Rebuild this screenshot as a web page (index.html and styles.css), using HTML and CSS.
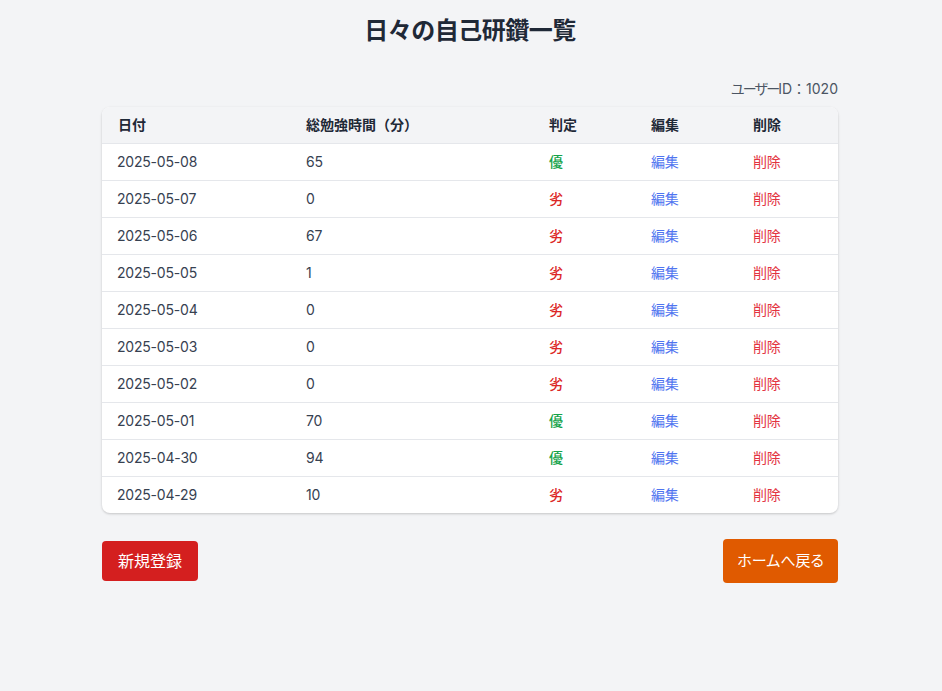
FILE: index.html
```html
<!DOCTYPE html>
<html lang="ja">
<head>
<meta charset="utf-8">
<title>日々の自己研鑽一覧</title>
<link rel="stylesheet" href="styles.css">
</head>
<body>
<main class="container">
  <h1 class="title">日々の自己研鑽一覧</h1>
  <div class="user-id"><span class="kana">ユーザー</span>ID：1020</div>
  <div class="card">
    <table class="records">
      <colgroup>
        <col class="c-date"><col class="c-min"><col class="c-judge"><col class="c-edit"><col class="c-del">
      </colgroup>
      <thead>
        <tr><th>日付</th><th>総勉強時間（分）</th><th>判定</th><th>編集</th><th>削除</th></tr>
      </thead>
      <tbody>
        <tr><td>2025-05-08</td><td>65</td><td class="good">優</td><td><a class="edit" href="#">編集</a></td><td><a class="del" href="#">削除</a></td></tr>
        <tr><td>2025-05-07</td><td>0</td><td class="bad">劣</td><td><a class="edit" href="#">編集</a></td><td><a class="del" href="#">削除</a></td></tr>
        <tr><td>2025-05-06</td><td>67</td><td class="bad">劣</td><td><a class="edit" href="#">編集</a></td><td><a class="del" href="#">削除</a></td></tr>
        <tr><td>2025-05-05</td><td>1</td><td class="bad">劣</td><td><a class="edit" href="#">編集</a></td><td><a class="del" href="#">削除</a></td></tr>
        <tr><td>2025-05-04</td><td>0</td><td class="bad">劣</td><td><a class="edit" href="#">編集</a></td><td><a class="del" href="#">削除</a></td></tr>
        <tr><td>2025-05-03</td><td>0</td><td class="bad">劣</td><td><a class="edit" href="#">編集</a></td><td><a class="del" href="#">削除</a></td></tr>
        <tr><td>2025-05-02</td><td>0</td><td class="bad">劣</td><td><a class="edit" href="#">編集</a></td><td><a class="del" href="#">削除</a></td></tr>
        <tr><td>2025-05-01</td><td>70</td><td class="good">優</td><td><a class="edit" href="#">編集</a></td><td><a class="del" href="#">削除</a></td></tr>
        <tr><td>2025-04-30</td><td>94</td><td class="good">優</td><td><a class="edit" href="#">編集</a></td><td><a class="del" href="#">削除</a></td></tr>
        <tr><td>2025-04-29</td><td>10</td><td class="bad">劣</td><td><a class="edit" href="#">編集</a></td><td><a class="del" href="#">削除</a></td></tr>
      </tbody>
    </table>
  </div>
  <div class="actions">
    <a class="btn btn-new" href="#">新規登録</a>
    <a class="btn btn-home" href="#">ホームへ戻る</a>
  </div>
</main>
</body>
</html>
```
FILE: styles.css
```css
* { box-sizing: border-box; }
html, body { margin: 0; padding: 0; }
body {
  background: #f3f4f6;
  font-family: Inter, "Noto Sans CJK JP", sans-serif;
  color: #1f2937;
  min-height: 691px;
}
.container {
  max-width: 768px;
  margin: 0 auto;
  padding: 15px 17px 0 15px;
}
.title {
  margin: 0 0 32px;
  font-size: 24px;
  line-height: 32px;
  font-weight: 700;
  text-align: center;
  letter-spacing: -0.5px;
  color: #1f2937;
}
.user-id {
  text-align: right;
  font-size: 14px;
  line-height: 20px;
  color: #4b5563;
  margin-bottom: 8px;
}
.kana { font-feature-settings: "palt"; letter-spacing: -1.8px; }
.card {
  background: #fff;
  border-radius: 8px;
  overflow: hidden;
  box-shadow: 0 1px 3px rgba(0,0,0,0.12), 0 1px 2px rgba(0,0,0,0.08);
}
.records {
  width: 100%;
  border-collapse: collapse;
  table-layout: fixed;
  font-size: 14px;
  line-height: 20px;
}
.c-date { width: 188px; }
.c-min { width: 243px; }
.c-judge { width: 102px; }
.c-edit { width: 102px; }
.c-del { width: auto; }
.records th {
  background: #f3f4f6;
  text-align: left;
  font-weight: 600;
  color: #1f2937;
  padding: 8px 16px 8px 16px;
  border-bottom: 1px solid #e5e7eb;
}
.records td {
  padding: 8px 16px;
  color: #374151;
  border-bottom: 1px solid #e5e7eb;
  letter-spacing: -0.2px;
}
.records td:first-child { padding-left: 15px; }
.records tbody tr:last-child td { border-bottom: none; }
.records td.good { color: #16a34a; font-weight: 500; }
.records td.bad { color: #dc2626; font-weight: 500; }
.edit { color: #4f74f0; text-decoration: none; }
.del { color: #e3343f; text-decoration: none; }
.actions {
  margin-top: 26px;
  display: flex;
  justify-content: space-between;
  align-items: center;
}
.btn {
  display: inline-block;
  color: #fff;
  text-decoration: none;
  border-radius: 4px;
}
.btn-new {
  background: #d41f1f;
  font-size: 16px;
  line-height: 24px;
  padding: 8px 16px;
}
.btn-home {
  background: #e05a00;
  font-size: 15px;
  line-height: 20px;
  padding: 12px 14px;
  font-feature-settings: "palt";
}
```
